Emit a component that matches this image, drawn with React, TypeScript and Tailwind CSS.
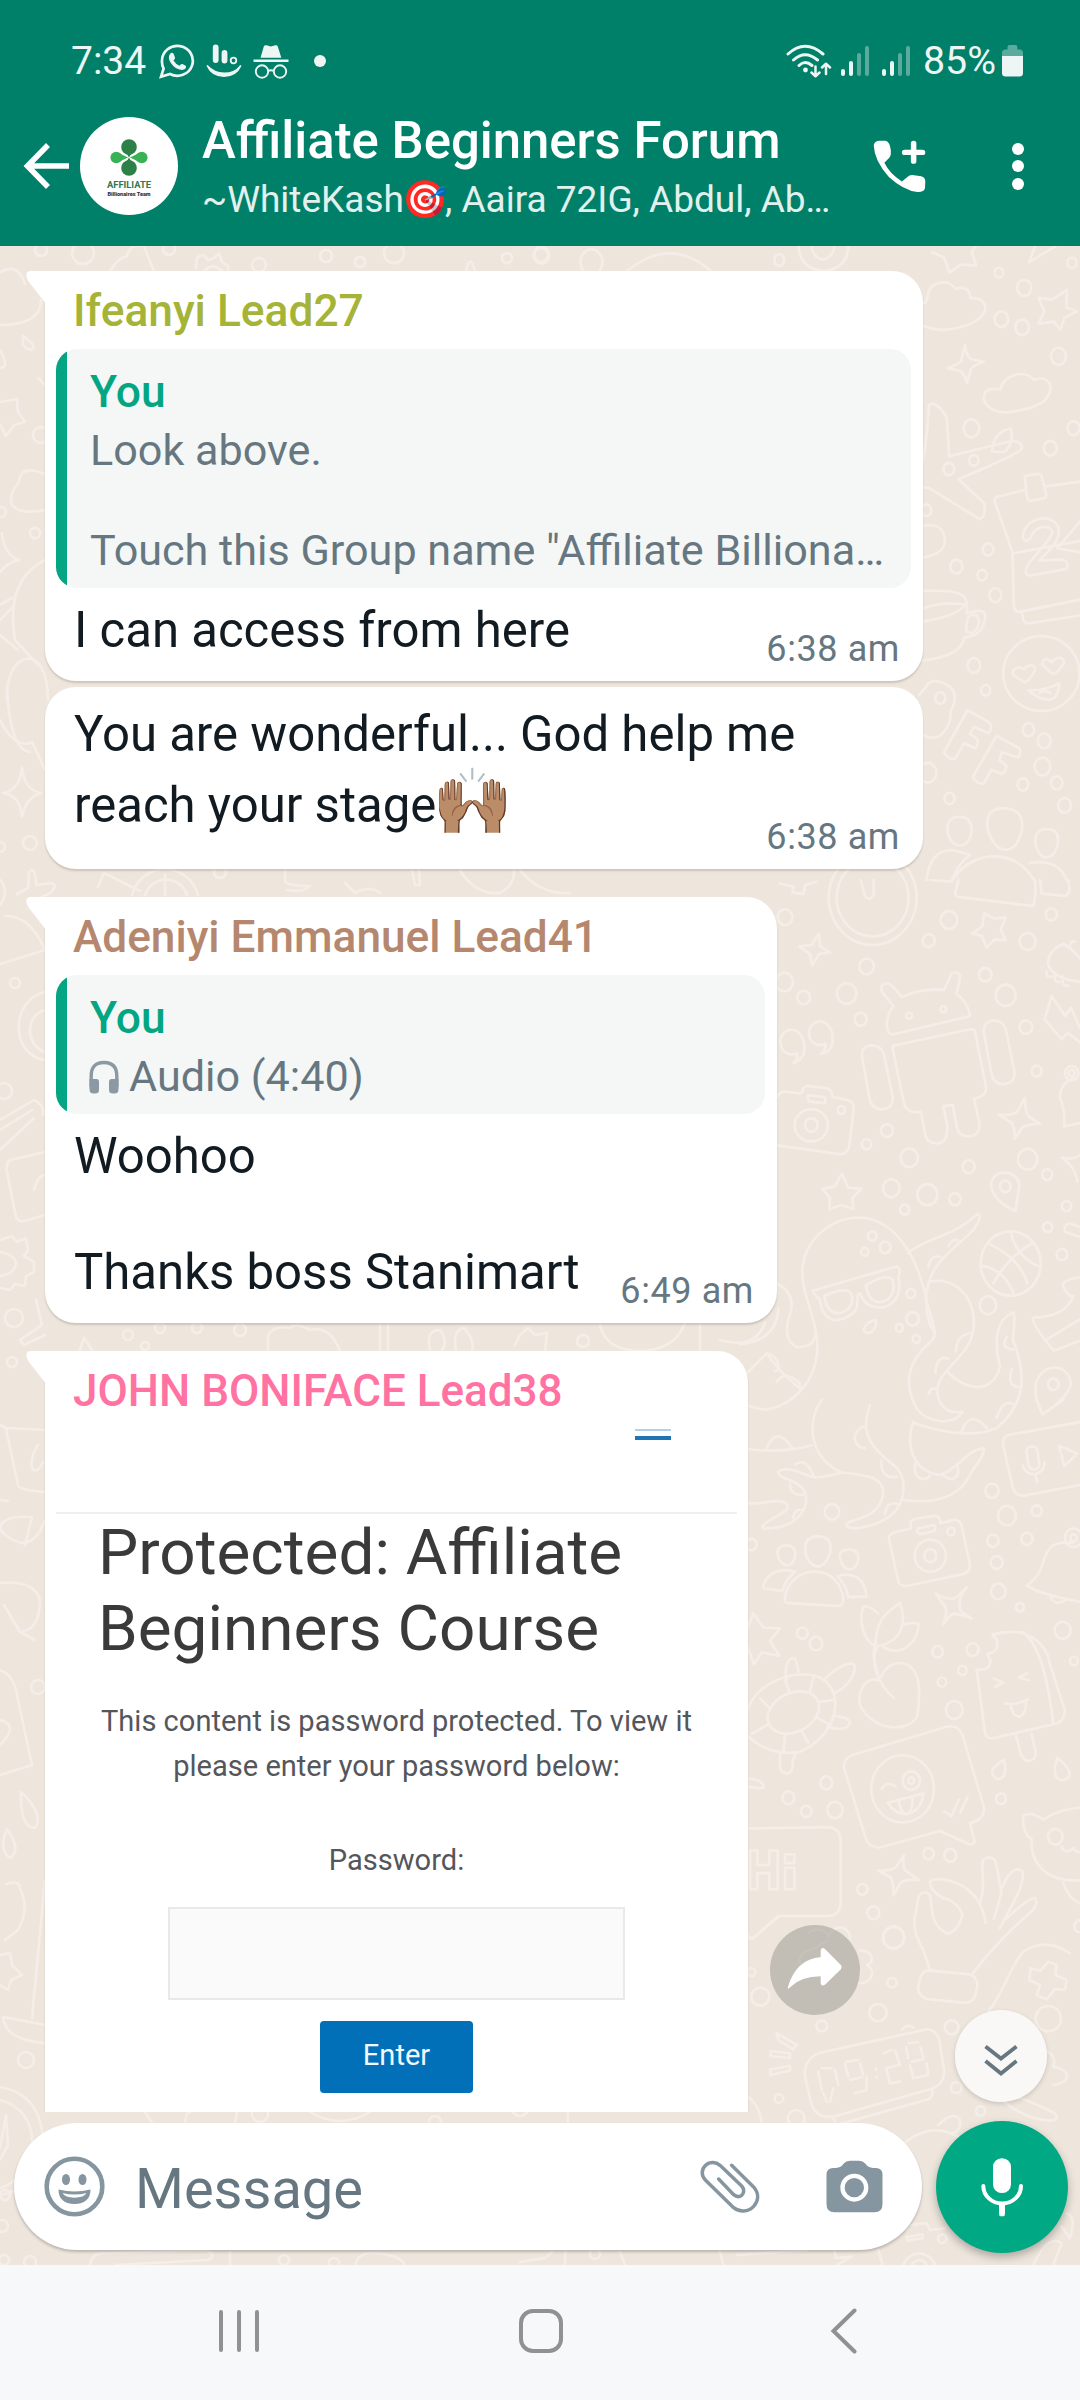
import React from "react";

/* ---------- Wallpaper ---------- */

const dotsTopRight: [number, number, number][] = [
  [1412, 117, 20], [1348, 194, 19], [1406, 214, 19], [1508, 285, 21], [1341, 80, 12], [1546, 56, 13], [1264, 461, 22], [1485, 510, 18],
  [1271, 540, 13], [1201, 561, 15], [1550, 461, 17], [1311, 758, 15], [1222, 800, 17], [1294, 821, 13], [1331, 870, 17], [1271, 1042, 18],
  [1304, 1103, 13], [1424, 1200, 16], [1468, 1227, 18], [1463, 1290, 22], [1503, 1330, 16], [1408, 1334, 15], [1203, 1368, 14], [1525, 1385, 18],
  [1142, 1305, 24], [60, 37, 21], [200, 54, 31], [726, 49, 14], [1138, 662, 14],
];
const dotsMidRight: [number, number, number][] = [
  [135, 104, 22], [566, 170, 18], [627, 112, 25], [863, 172, 24], [934, 96, 17], [380, 242, 22], [320, 318, 29], [191, 329, 19], [133, 286, 26],
  [736, 265, 19], [797, 323, 30], [362, 390, 18], [858, 412, 19], [890, 535, 15], [441, 702, 18], [380, 740, 14], [508, 778, 26], [686, 803, 18],
  [863, 782, 29], [922, 825, 15], [454, 863, 25], [562, 881, 30], [645, 894, 17], [494, 923, 14], [980, 913, 14], [923, 972, 14], [966, 1049, 16],
  [744, 1191, 25], [397, 997, 13], [436, 1029, 16], [374, 1041, 11], [513, 1158, 13], [518, 1229, 19], [478, 1254, 11], [529, 1285, 11],
];
const dotsLowRight: [number, number, number][] = [
  [276, 313, 22], [34, 405, 16], [756, 254, 20], [801, 324, 27], [890, 310, 15], [759, 394, 17], [861, 389, 17], [770, 455, 18], [775, 536, 22],
  [840, 580, 12], [187, 653, 16], [228, 682, 19], [593, 705, 16], [698, 699, 18], [667, 757, 13], [606, 790, 13], [643, 868, 25], [968, 645, 24],
  [1002, 731, 12], [259, 1072, 18], [145, 1114, 18], [199, 1152, 16], [285, 1148, 23], [783, 1117, 15], [566, 1271, 16], [631, 1275, 18],
  [367, 1370, 15], [400, 1436, 18], [461, 1505, 31],
];
const dotsBottomRight: [number, number, number][] = [
  [581, 263, 32], [576, 398, 14], [534, 488, 26], [365, 528, 16], [181, 440, 27], [154, 367, 12], [237, 746, 13], [289, 805, 25], [755, 532, 21],
  [769, 713, 16], [842, 783, 14], [1045, 506, 38], [727, 1166, 13], [1141, 229, 18],
];
const dotsLeft: [number, number, number][] = [
  [41, 250, 6], [83, 253, 11], [169, 249, 6], [326, 256, 6], [259, 265, 7], [360, 262, 5], [394, 253, 10], [507, 258, 5], [541, 255, 7],
  [35, 533, 5], [41, 435, 8], [1, 512, 5], [30, 843, 7], [0, 847, 5], [15, 983, 5], [4, 1091, 8], [14, 1318, 9], [128, 1335, 5], [160, 1328, 5],
  [145, 1346, 4], [12, 1362, 5], [38, 1687, 7], [26, 2060, 8], [5, 2195, 5], [2, 2226, 6], [4, 2260, 5], [30, 2262, 6], [284, 2260, 5], [334, 2263, 5],
  [583, 1341, 6], [197, 1328, 5], [240, 1330, 6], [260, 2114, 8], [435, 2122, 6], [520, 2108, 8], [595, 2254, 5], [220, 872, 6],
];

function Dots({ items }: { items: [number, number, number][] }) {
  return (
    <>
      {items.map(([x, y, r], i) => (
        <circle key={i} cx={x} cy={y} r={r} />
      ))}
    </>
  );
}

function Wallpaper() {
  return (
    <svg
      className="absolute inset-0 h-full w-full [&_*]:[vector-effect:non-scaling-stroke]"
      viewBox="0 246 1080 2019"
      preserveAspectRatio="none"
      fill="none"
      stroke="#f5eee8"
      strokeWidth="2.6"
      strokeLinecap="round"
      strokeLinejoin="round"
    >
      <g transform="translate(520 240) scale(.3571 .4082)">
        <Dots items={dotsTopRight} />
        <path d="M300 76Q420-10 535 76M780 10Q780 70 850 76Q920 70 920 10M815 10Q820 45 850 48Q880 40 880 10M1155 30L1187 43L1203 80L1235 60L1278 63L1265 30L1280 10M1500 15L1425 55L1445 10" />
        <path d="M1128 155C1140 155 1140 140 1145 125C1160 100 1200 95 1220 120C1245 110 1262 125 1260 142C1290 140 1305 155 1303 170C1295 200 1240 216 1190 220C1165 222 1145 215 1128 210" />
        <path d="M1532 122L1530 165L1560 175L1525 190L1513 220L1495 200L1452 205L1468 175L1452 142L1490 146Z" />
        <path d="M1246 258Q1252 290 1265 292L1299 299Q1270 305 1262 318L1252 350Q1242 325 1233 320L1197 314Q1225 305 1235 297Z" />
        <path d="M1302 375C1310 360 1335 365 1345 366C1355 330 1410 315 1440 343C1470 330 1490 350 1484 372C1475 405 1420 415 1370 422C1320 425 1290 400 1302 375Z" />
        <path d="M1128 545Q1142 470 1145 405Q1165 390 1195 435L1202 530L1380 492Q1410 495 1404 512Q1395 525 1228 586L1300 645Q1305 680 1287 684L1145 607H1128" />
        <path d="M1322 518Q1325 470 1375 462Q1385 500 1355 520ZM1333 630L1415 612M1470 604L1568 592M1414 585Q1412 578 1420 577L1450 573Q1460 573 1462 582L1473 620Q1475 632 1465 633L1432 639Q1422 639 1420 630ZM1333 630Q1328 635 1330 642L1379 765L1383 895Q1385 912 1400 911L1568 881M1379 768L1568 737M1405 912L1410 932Q1415 940 1425 939L1568 920" />
        <path d="M1408 728C1410 680 1490 665 1508 705C1515 740 1480 760 1455 785L1520 783Q1540 790 1530 806L1430 822Q1410 822 1420 800C1440 770 1490 735 1490 715C1485 695 1440 700 1430 730Q1415 745 1408 728ZM1568 690L1505 755L1568 765" />
        <path d="M1128 860Q1240 855 1248 880Q1255 900 1250 915Q1300 900 1303 920Q1300 970 1245 973Q1235 1020 1128 1030M1128 935Q1230 920 1245 893Q1180 885 1128 903M1255 925Q1240 965 1265 963Q1295 945 1280 920Q1265 915 1255 925ZM1128 700Q1190 690 1190 740Q1185 770 1128 778" />
        <ellipse cx="1460" cy="1062" rx="107" ry="92" />
        <path d="M1380 1065C1378 1045 1400 1045 1412 1052C1425 1035 1450 1042 1440 1058Q1425 1080 1413 1084ZM1462 1040C1465 1022 1480 1025 1490 1035C1500 1018 1530 1022 1522 1038Q1508 1058 1492 1064ZM1424 1103Q1470 1105 1510 1086Q1510 1115 1490 1125Q1455 1130 1424 1103ZM1455 1110Q1470 1100 1485 1110" />
        <path d="M1118 1115L1145 1085Q1165 1072 1205 1095Q1230 1120 1205 1155Q1210 1190 1175 1215Q1150 1225 1128 1212M1253 1152L1315 1182Q1325 1195 1312 1208L1272 1193L1260 1210L1280 1222Q1285 1235 1275 1245L1243 1233L1220 1268Q1205 1278 1187 1255ZM1335 1215L1398 1245Q1405 1258 1395 1268L1350 1255L1342 1275L1362 1288Q1362 1302 1350 1308L1320 1298L1300 1330Q1285 1338 1268 1315Z" />
        <circle cx="1177" cy="1122" r="14" />
        <path d="M1354 1392C1420 1392 1415 1450 1385 1485Q1355 1505 1330 1480C1300 1445 1295 1392 1354 1392ZM1230 1413C1275 1413 1270 1460 1250 1478Q1228 1490 1210 1475C1190 1450 1190 1413 1230 1413ZM1475 1443C1520 1443 1510 1490 1490 1507Q1470 1520 1455 1503C1435 1475 1440 1443 1475 1443ZM1138 1568Q1150 1490 1215 1495L1260 1506Q1225 1530 1210 1568M1210 1568Q1260 1508 1330 1510Q1400 1512 1440 1568M1427 1526Q1510 1515 1530 1568" />
      </g>

      <g transform="translate(740 880) scale(.3333 .3571)">
        <Dots items={dotsMidRight} />
        <circle cx="398" cy="50" r="132" />
        <circle cx="398" cy="50" r="108" />
        <path d="M362 0L375 45Q390 62 402 40L400 0M120 10L160 18L158 35L190 40L195 15L230 5M655 0L645 40Q650 48 660 48L880 73Q890 40 885 0M900 0L905 38L975 45Q990 40 988 20L985 0M570 0L635 5" />
        <path d="M733 93L762 108L797 105L782 138L796 168L763 167L740 190L726 157L697 150L727 130ZM237 150L240 185L270 203L238 207L217 240L210 207L178 186L215 182Z" />
        <path d="M445 425C435 400 445 370 460 353L425 312Q420 290 440 290Q455 290 485 328Q545 302 612 308L635 262Q650 252 660 268Q660 290 648 318Q680 340 690 375Q690 382 683 383L460 432Q448 433 445 425Z" />
        <circle cx="507" cy="380" r="9" />
        <circle cx="610" cy="362" r="9" />
        <path d="M458 472Q456 464 466 463L690 418Q702 415 705 425L738 580Q742 605 702 612L718 680Q720 718 685 718Q655 718 650 690L638 630L610 633L622 690Q625 735 590 738Q560 738 555 710L543 650Q500 655 492 625ZM367 500Q360 465 395 463Q425 463 432 490L458 605Q462 640 425 642Q395 642 388 610ZM732 430Q728 395 762 393Q790 393 798 420L823 535Q828 568 790 572Q762 572 755 545Z" />
        <path d="M193 470C190 400 120 410 121 455C122 485 155 495 172 484Q175 500 160 513Q195 500 193 470ZM278 445C278 380 205 385 207 430C208 460 240 468 257 458Q258 475 243 487Q280 480 278 445Z" />
        <path d="M110 610Q120 592 135 593L182 597Q188 595 190 583Q195 577 205 577L262 583Q275 585 277 607L325 617Q342 622 341 640L328 745Q322 768 300 768L110 743M205 603L250 607Q258 612 255 625L208 620Q200 615 205 603Z" />
        <ellipse cx="214" cy="687" rx="50" ry="45" />
        <circle cx="214" cy="686" r="19" />
        <circle cx="304" cy="644" r="11" />
        <path d="M855 610Q855 655 870 665L900 682Q855 685 845 695L824 725Q825 690 815 680L776 657Q815 660 830 650ZM305 822L325 862L364 865L337 890L340 922L303 910L268 922L270 890L247 865L285 858ZM827 927Q760 900 753 855C755 805 835 810 838 855Z" />
        <circle cx="796" cy="858" r="16" />
        <path d="M935 325L975 380L993 358L1020 415M935 325L914 390L965 446L983 428L1020 455M925 240Q920 200 970 178Q1000 195 1020 220M925 240Q950 280 1020 285M920 255Q915 275 935 270M945 262Q940 290 958 285M968 270Q965 300 985 296M990 185Q990 170 1005 172M960 610Q960 570 1000 555M960 610Q975 640 973 690L1020 680" />
        <circle cx="995" cy="541" r="20" />
        <circle cx="995" cy="541" r="9" />
        <path d="M965 778Q1000 785 1020 770M965 778Q1005 800 1012 845M1020 1000L975 985Q970 965 990 962L1020 972M968 1135Q970 1118 1020 1113M968 1135Q985 1170 1000 1165Q975 1225 880 1225Q870 1240 942 1318L1020 1290M915 1290L1020 1230" />
        <circle cx="812" cy="1074" r="90" />
        <path d="M727 1080Q790 1090 820 1155M750 1020Q840 1060 862 1130M760 1130Q800 1060 875 1018M812 985Q830 1060 900 1083" />
        <path d="M232 1300C230 1220 185 1170 187 1090C195 1000 280 945 358 945C480 950 540 1080 560 1180C580 1250 595 1270 575 1290C500 1350 490 1410 530 1480C560 1520 640 1530 668 1490C600 1500 580 1440 600 1400C640 1340 700 1320 702 1240C700 1160 640 1110 565 1125M503 1045C560 1000 640 1000 712 935Q730 940 700 980C640 1040 560 1070 558 1180Q560 1240 585 1270" />
        <path d="M218 1150L470 1082Q485 1090 475 1110Q490 1180 430 1197Q375 1200 362 1160Q350 1150 352 1190Q345 1225 285 1233Q245 1225 240 1175Q225 1165 218 1150ZM253 1165Q260 1215 300 1213Q345 1200 335 1160Q320 1135 253 1165ZM378 1135Q385 1185 425 1182Q470 1170 458 1120Q440 1100 378 1135ZM370 1260Q380 1235 408 1232Q412 1250 395 1265Q380 1275 370 1260Z" />
        <path d="M110 1130Q175 1160 145 1230Q130 1290 170 1308Q225 1310 225 1270M232 1300C235 1400 160 1470 80 1483Q40 1480 22 1470M0 1300Q110 1290 115 1200M22 1380Q70 1335 80 1325Q110 1370 180 1425M80 1325C130 1340 115 1380 105 1375M110 1405Q135 1370 180 1410V1425M620 1375C700 1450 770 1420 780 1360C760 1290 770 1230 820 1210C830 1230 815 1290 820 1290C870 1410 840 1480 770 1535Q680 1570 525 1522" />
        <path d="M648 1320Q650 1270 695 1270M586 1380Q590 1330 625 1340M566 1440Q570 1420 590 1425M665 1545Q690 1480 740 1535M770 1505Q790 1450 825 1470M840 1420Q800 1420 815 1370M820 1315Q780 1310 800 1280M625 1025Q640 1000 655 1010M565 1085Q570 1050 600 1055" />
        <path d="M908 1495Q880 1450 888 1410C905 1350 985 1350 993 1410Q985 1450 908 1495Z" />
        <circle cx="940" cy="1412" r="16" />
      </g>

      <g transform="translate(740 1400) scale(.3333 .3571)">
        <Dots items={dotsLowRight} />
        <path d="M245 0C200 60 205 160 305 203C390 210 430 220 430 260C420 330 350 330 320 345C310 370 400 360 450 325C500 290 500 220 470 190C420 150 350 110 390 15M305 203Q220 225 200 210C150 190 130 190 115 200C110 220 160 220 185 245C220 280 190 360 70 360C50 350 130 320 142 305C150 285 120 280 85 285Q50 292 22 288M22 137Q130 150 215 127M80 135Q110 70 155 133M343 105Q350 75 375 75M375 135Q350 135 343 105M425 170C420 200 440 222 470 215M520 60C495 130 520 200 600 210C660 190 680 140 730 135C740 150 700 190 690 210Q640 300 490 280M525 180C520 230 560 225 570 212M650 180C665 210 640 235 612 212M150 235Q150 270 190 265M165 180Q200 160 220 212M160 330Q165 300 190 310M435 320Q440 280 475 292" />
        <path d="M1020 62L805 98Q785 105 790 130L820 250Q828 268 850 268L1020 238M860 145Q862 130 875 130Q890 130 893 145L898 180Q895 195 882 195Q867 193 865 180ZM848 183Q855 208 885 208Q915 200 913 175M886 208L892 230M957 128L1012 150L973 185ZM890 0L908 40L970 0" />
        <path d="M447 390Q445 378 460 372L512 360V342Q515 335 530 332L585 324Q600 325 602 345L645 335Q660 338 664 350L690 460Q692 480 670 487L500 521Q480 522 475 508ZM533 360L580 350Q590 355 583 367L540 376Q528 372 533 360Z" />
        <ellipse cx="571" cy="436" rx="47" ry="45" />
        <circle cx="571" cy="436" r="18" />
        <circle cx="633" cy="368" r="11" />
        <path d="M233 382C290 382 275 440 250 460Q230 475 210 455C190 430 185 382 233 382ZM138 407C175 407 170 445 152 460Q138 468 124 455C108 435 105 407 138 407ZM327 419C365 419 358 455 342 470Q326 480 312 467C295 445 290 419 327 419ZM135 555C145 460 300 450 310 560Q308 578 295 577L140 568Q132 566 135 555ZM70 520Q90 465 165 480Q135 505 127 535L72 528ZM292 493Q370 475 380 550L325 552Q320 520 292 493Z" />
        <path d="M22 640L40 597L70 637L120 640L90 675L118 716L65 707L42 740L22 690M680 525Q650 560 662 590L694 612Q650 595 635 600L610 627Q625 590 615 578L588 543Q630 565 650 552Z" />
        <path d="M480 568C500 620 490 680 405 690C410 620 430 600 480 568ZM415 598Q390 575 370 578C355 620 370 670 405 690M485 630Q520 620 537 628C530 680 490 720 430 693M412 690C385 740 420 800 462 835M405 690C390 730 420 760 415 785C370 770 340 840 370 870C410 930 520 930 533 880C540 820 545 760 500 740Q450 725 423 775" />
        <ellipse cx="160" cy="875" rx="80" ry="55" transform="rotate(-22 160 875)" />
        <path d="M22 870C50 780 200 740 260 790C320 850 270 950 180 985Q90 1000 22 940M60 835L88 862M135 785L150 822M222 770L210 815M285 840L235 845M270 910L232 890M205 960L185 928M130 990L135 935M35 935L85 908M140 785C130 740 150 715 165 725Q180 760 172 770M255 780C300 740 340 730 345 745C345 780 310 810 285 820M120 985V1030Q125 1048 145 1046Q160 1040 158 1010L168 985M285 885Q330 890 330 905Q320 930 262 915M22 1060Q75 1065 70 1085Q55 1090 22 1082" />
        <path d="M312 1030Q310 1005 335 995L620 915Q655 908 668 940L732 1140Q735 1175 690 1185L704 1235Q702 1248 685 1243L600 1207L420 1253Q395 1255 380 1235Z" />
        <circle cx="488" cy="1089" r="94" />
        <circle cx="514" cy="1066" r="26" />
        <circle cx="514" cy="1066" r="9" />
        <path d="M425 1090Q440 1065 467 1082M443 1128L550 1102Q545 1150 500 1160Q465 1160 443 1128ZM478 1125Q480 1155 500 1160Q520 1150 517 1113M612 1152L635 1165L657 1118M660 1157L683 1112" />
        <path d="M757 657C860 630 920 680 930 740L975 870Q972 905 940 908L755 948Q738 948 735 930L710 755Q750 760 752 730Q740 715 745 710Q780 705 770 670ZM850 650C890 680 920 750 940 908M762 780L790 792L765 803M862 765L838 777L866 785M795 850Q830 855 865 838M812 852Q815 885 838 887Q860 880 858 842M828 940L843 990Q850 1012 870 1010Q890 1005 887 985L875 935" />
        <path d="M22 1200L265 1196Q302 1200 302 1235V1410Q300 1443 265 1445H118L40 1505Q22 1508 22 1490" />
        <path d="M30 1262H52V1302H88V1262H113V1370H88V1325H52V1370H30ZM135 1310H163V1370H135ZM135 1272H163V1297H135ZM792 1008Q750 1030 758 1050Q770 1070 790 1055Q800 1040 792 1008ZM952 1002Q990 1030 990 1050Q975 1075 950 1058Q938 1040 952 1002Z" />
        <path d="M492 1275Q485 1310 500 1320L537 1345Q490 1340 480 1355L460 1387Q462 1345 450 1335L413 1317Q460 1320 470 1305ZM861 520C920 480 900 440 935 410Q960 395 1000 400M861 520Q900 545 1020 565M932 548Q940 580 980 560M1020 1142Q960 1145 910 1175Q870 1150 850 1165Q845 1210 875 1230C870 1290 910 1350 1020 1345M970 1352Q985 1395 1020 1410M965 1250Q975 1275 1000 1255Q1010 1270 1020 1265" />
        <circle cx="1001" cy="386" r="26" />
        <circle cx="1001" cy="386" r="10" />
        <circle cx="946" cy="1223" r="22" />
      </g>

      <g transform="translate(700 1850) scale(.3333)">
        <Dots items={dotsBottomRight} />
        <path d="M645 200Q635 240 670 300L690 360M645 200L655 145Q665 115 690 135C700 190 690 220 740 250Q770 250 788 195Q780 170 750 150C720 145 690 120 690 95C710 75 840 90 857 220M840 160C860 100 840 60 850 30Q865 15 885 30C900 80 900 120 905 130C890 170 890 190 882 205M905 120C920 70 950 45 968 65C975 110 930 170 900 235M920 205Q990 140 1005 145Q1015 155 1000 180C930 240 880 290 815 375" />
        <path d="M690 362L805 373Q835 380 832 410L825 440Q815 460 790 458L680 447Q650 435 655 410L662 380Q670 360 690 362ZM865 485C910 430 930 350 970 305Q1040 260 1110 310M1045 335L1070 345L1066 375L1100 390L1095 420L1065 417L1040 448L1010 435L1020 405L988 390L992 355L1022 362Z" />
        <path d="M315 680Q310 630 355 610L680 538Q710 540 718 570L732 660Q735 700 700 715L400 800Q350 805 335 765ZM605 540Q620 520 640 532M400 805L410 825L685 748Q702 740 697 722" />
        <path d="M230 550L290 585L280 598L235 570ZM212 603L270 610V625L212 618ZM210 658L270 648V662L212 675ZM328 250C340 230 380 240 385 260C400 220 450 225 450 265M385 270L345 295Q290 310 300 340M480 302C520 300 525 340 500 345C530 360 515 400 480 400M145 265H160L235 197M830 560Q840 510 900 500M975 640C990 570 1080 600 1060 650C1120 660 1110 700 1060 705M900 740C950 730 1000 760 1065 790Q1080 810 1050 812C990 810 940 780 900 745" />
        <path d="M145 740Q180 770 185 815M590 900Q690 800 790 870L815 930M715 825Q760 780 780 810Q785 850 750 850M620 1140L625 1125L680 1120L690 1140L735 1135M620 1162L668 1152V1165L622 1172ZM610 1245A50 50 0 0 1 705 1245M636 1245A24 24 0 0 1 680 1245M535 1200L548 1245M1100 1090Q1130 1100 1110 1165L1085 1130M1000 1245C1030 1180 1060 1160 1085 1180L1060 1245M400 1190L408 1225L455 1220L410 1245M60 1205L70 1245M110 1215L320 1200" />
        <path d="M355 665L365 720M365 655H395M405 660L415 705M390 755L400 715M370 730L380 755M435 640L445 680M440 635L475 630M480 640L490 675M450 690L485 682M500 680L500 715M465 730L500 720M528 655V660M530 680V683M550 610L575 600M585 600L600 645M560 655L595 645M560 660L570 700L600 695M618 590L625 625M625 580L655 577M660 590L670 620M635 635L670 627M630 645L640 685L685 675L680 640" />
      </g>

      <Dots items={dotsLeft} />
      <path d="M110 271Q118 258 127 256Q130 243 144 246Q150 262 154 271M196 268L197 258Q203 252 208 260Q213 260 219 253L222 262L228 266V271M204 271Q213 262 222 271M466 271Q470 252 475 271M0 272Q18 262 25 284M41 300Q41 325 0 325M23 336Q35 345 34 348Q29 352 23 345ZM0 350Q10 368 0 368M38 378L45 385M0 402L17 399L18 412L25 422L14 425L6 436L0 424M45 474Q20 464 19 482Q8 495 12 505Q20 515 45 510M2 533Q4 555 19 560Q8 562 0 572M45 560Q5 580 15 640L38 665M0 605Q8 600 12 598M0 620L12 608M7 700C5 650 48 640 48 700M0 635L18 650M7 687Q10 750 30 752M0 720Q15 750 32 742L45 770M22 767Q24 790 41 793Q26 797 22 817Q20 795 3 793Q20 790 22 767ZM98 887L104 873L140 891M132 895A34 34 0 0 1 198 895M145 895A22 22 0 0 1 187 895M165 875V895M31 870Q36 870 36 885L52 883Q58 886 50 893L40 898M17 894L28 888L29 872M0 880Q10 890 0 905M5 916Q30 915 45 950M0 964L45 950M45 992C10 1000 10 1055 45 1060M45 1010C25 1015 25 1045 45 1052M0 1120L34 1100Q45 1105 43 1115M0 1130L32 1110M0 1150L34 1118M45 1152L10 1160Q5 1165 7 1172L16 1217Q18 1222 24 1221L45 1215M34 1190Q38 1175 45 1175" />
      <path d="M0 1240L12 1236L17 1242L26 1238L28 1250L24 1256L34 1262V1272L26 1276L25 1286L15 1284L10 1290L0 1288M0 1252Q16 1255 16 1264Q14 1274 0 1276M36 1300L42 1325L20 1340L24 1345L45 1335M80 1350L84 1338L92 1350M285 870V880Q285 886 310 886Q304 893 287 890M345 883L355 893Q370 885 380 893M412 870L415 885H420L419 870M460 870Q475 895 500 893Q515 885 514 870M520 870Q540 895 570 893M0 1425L6 1428L45 1430M6 1429L18 1485Q19 1490 45 1492M38 1445Q30 1457 32 1468Q37 1475 43 1462M0 1500L8 1501M45 1520Q30 1560 0 1530Q0 1515 32 1517L25 1545M0 1583Q35 1580 40 1600Q40 1630 20 1632L35 1640M20 1632L4 1605M0 1670Q15 1675 18 1700L32 1765L0 1775M0 1720Q20 1725 0 1745M21 1792Q45 1815 35 1828Q20 1828 21 1792ZM7 1829Q22 1850 10 1858Q-2 1850 7 1829ZM6 1884Q20 1880 20 1888Q30 1910 18 1930L5 1940M45 1880L32 2018M3 2017L45 2025M3 2017Q5 2040 45 2043M0 1955L10 1953L12 1965L22 1975L11 1980L8 1990L0 1985" />
      <path d="M0 2087Q45 2095 43 2150Q35 2190 0 2195M0 2100Q35 2110 32 2150Q25 2180 0 2188M0 2148L6 2115L8 2145L0 2160M145 2112L152 2123M185 2123Q186 2112 190 2112M235 2123L237 2112M310 2112Q340 2130 370 2112M90 2265Q92 2252 105 2253L205 2250Q218 2255 208 2260L115 2265M230 2252V2265M355 2265Q358 2252 375 2253Q400 2255 405 2265M520 2262L545 2258L552 2252M565 2265L568 2112M620 2252L625 2265M268 1351V1335Q275 1325 290 1328Q295 1322 310 1330Q330 1325 340 1351M380 1323V1351M388 1323V1351M515 1345L520 1335L528 1328L535 1335L547 1333L545 1351M600 1325Q605 1350 640 1351Q675 1350 685 1323M700 1323V1351M720 1340Q755 1350 765 1323M430 1350Q425 1330 440 1330Q448 1340 442 1351M456 1350Q452 1330 464 1328Q475 1340 472 1351" />
    </svg>
  );
}

/* ---------- Icons ---------- */

function WhatsAppIcon() {
  return (
    <svg className="h-9 w-[36px]" viewBox="0 0 36 36" fill="none">
      <path d="M3 17.6A15.4 15 0 1 1 11 31L2 33.8 4.6 25.5A15 15 0 0 1 3 17.6Z" stroke="#edf6f4" strokeWidth="2.7" />
      <path d="M11 11Q12.500 9 14.500 10.500L16 14.500Q16.300 16 14.500 17.500Q16.500 21 20.500 22.800Q22 20.500 23.500 21L27 23Q27.500 26.500 23 27Q16 26.500 11.500 19.500Q8.500 14.500 11 11Z" fill="#edf6f4" />
    </svg>
  );
}

function HandIcon() {
  return (
    <svg className="h-9 w-[36px]" viewBox="0 0 36 36" fill="none" stroke="#edf6f4" strokeLinecap="round">
      <path d="M9.700 4.500V17M18.500 10V17.500" strokeWidth="5.800" />
      <circle cx="27.500" cy="17.500" r="2.800" strokeWidth="1.800" />
      <path d="M1.500 23Q6 33 18 33.200Q30 33 34.500 23Q29 30.500 18 30.500Q8 30 1.500 23Z" fill="#edf6f4" strokeWidth="1.800" strokeLinejoin="round" />
    </svg>
  );
}

function IncognitoIcon() {
  return (
    <svg className="h-9 w-[36px]" viewBox="0 0 36 36" fill="none">
      <path d="M7.500 14.800L10.800 3.500Q11.500 1.800 13.500 2.300L17.800 3.500L22.300 2.300Q24.200 1.900 24.800 3.600L28.300 14.800Z" fill="#edf6f4" />
      <path d="M.5 16.500H35.500V19H.5Z" fill="#edf6f4" />
      <circle cx="9" cy="28.500" r="6.200" stroke="#edf6f4" strokeWidth="1.900" />
      <circle cx="27" cy="28.500" r="6.200" stroke="#edf6f4" strokeWidth="1.900" />
      <path d="M15 28Q18 26.500 21 28" stroke="#edf6f4" strokeWidth="1.900" />
    </svg>
  );
}

function WifiIcon() {
  return (
    <svg className="h-[34px] w-[46px]" viewBox="0 0 46 34" fill="none" stroke="#edf6f4" strokeWidth="3" strokeLinecap="round" strokeLinejoin="round">
      <path d="M2 10Q19-5.500 37 10M7.500 16Q19 5.500 31.500 16M13 21.500Q19 15.500 26 21.500" />
      <circle cx="19.500" cy="26" r="2.400" fill="#edf6f4" stroke="none" />
      <path d="M29.500 22.500V32M25.500 28.500L29.500 32.300L33.500 28.500M40 30V20M36 23.500L40 19.700L44 23.500" strokeWidth="2.500" />
    </svg>
  );
}

function SignalIcon() {
  return (
    <div className="flex h-[30px] items-end gap-[4px]">
      <span className="h-[7px] w-[4px] rounded-full bg-[#edf6f4]" />
      <span className="h-[15px] w-[4px] rounded-full bg-[#edf6f4]" />
      <span className="h-[23px] w-[4px] rounded-full bg-[#5aab9d]" />
      <span className="h-[30px] w-[4px] rounded-full bg-[#5aab9d]" />
    </div>
  );
}

function BatteryIcon() {
  return (
    <svg className="h-[32px] w-[21px]" viewBox="0 0 21 32">
      <path d="M0 11V8Q0 4.500 3.500 4.500H5.500V2Q5.500 0 7.500 0H13.500Q15.300 0 15.300 2V4.500H17.500Q21 4.500 21 8V11Z" fill="#5aab9d" />
      <path d="M0 11H21V28Q21 31.500 17.500 31.500H3.500Q0 31.500 0 28Z" fill="#edf6f4" />
    </svg>
  );
}

function GroupLogo() {
  return (
    <div className="flex h-[98px] w-[98px] shrink-0 flex-col items-center overflow-hidden rounded-full bg-white pt-[21px] font-['Roboto',sans-serif]">
      <svg className="h-[40px] w-[40px]" viewBox="0 0 42 42">
        <circle cx="21" cy="9.500" r="8.200" fill="#2d8048" />
        <path d="M14 14Q19 16 21 20.500Q23 16 28 14Z" fill="#2d8048" />
        <circle cx="21" cy="31.500" r="8.200" fill="#2d8048" />
        <path d="M14 27Q19 25 21 20.500Q23 25 28 27Z" fill="#2d8048" />
        <circle cx="7.500" cy="20.500" r="6" fill="#37b254" />
        <path d="M10 15Q14 18 20 20.500Q14 23 10 26Z" fill="#37b254" />
        <circle cx="34.500" cy="20.500" r="6" fill="#37b254" />
        <path d="M32 15Q28 18 22 20.500Q28 23 32 26Z" fill="#37b254" />
      </svg>
      <div className="mt-[2px] text-[9.4px] leading-[10px] font-bold text-[#2f7a4e]">AFFILIATE</div>
      <div className="text-[5.500px] leading-[8px] font-black text-[#333]">Billionaires Team</div>
    </div>
  );
}

function AddCallIcon() {
  return (
    <svg className="h-[53px] w-[53px]" viewBox="966 422 154 158" preserveAspectRatio="none">
      <path
        d="M968 438Q970 424 985 424L1003 424Q1015 426 1018 455Q1019 468 1014 474L999 490Q1014 522 1050 546L1066 532Q1071 526 1080 526L1106 530Q1118 533 1118 546L1117 566Q1114 578 1095 577Q1055 572 1012 532Q970 485 968 438Z"
        fill="#fff"
      />
      <path d="M1084 432V485M1058 459H1110" stroke="#fff" strokeWidth="16" strokeLinecap="round" />
    </svg>
  );
}

function HeadphonesIcon() {
  return (
    <svg className="h-[34px] w-[30px]" viewBox="0 0 30 34" fill="none">
      <path d="M2.200 27V16Q2.200 2.500 15 2.500Q27.800 2.500 27.800 16V27" stroke="#8a99a4" strokeWidth="3.400" />
      <path d="M.5 19H7.500Q10 19 10 22V30Q10 33.500 6 33.500H4.500Q.5 33.500 .5 29.500ZM29.500 19H22.500Q20 19 20 22V30Q20 33.500 24 33.500H25.500Q29.500 33.500 29.500 29.500Z" fill="#8a99a4" />
    </svg>
  );
}

function SmileyIcon() {
  return (
    <svg className="h-[61px] w-[61px]" viewBox="0 0 61 61" fill="#8696a0">
      <circle cx="30.500" cy="30.500" r="27.800" fill="none" stroke="#8696a0" strokeWidth="4.600" />
      <ellipse cx="22" cy="23.500" rx="4" ry="5.500" />
      <ellipse cx="38.500" cy="23.500" rx="4" ry="5.500" />
      <path d="M14.500 33.500Q30.500 37.500 46.500 33.500Q46.500 47.500 30.500 48Q14.500 47.500 14.500 33.500Z" />
      <path d="M18.500 37Q30.500 40 42.500 37Q40 41.500 30.500 41.700Q21 41.500 18.500 37Z" fill="#fff" />
    </svg>
  );
}

function PaperclipIcon() {
  return (
    <svg className="h-[53px] w-[60px]" viewBox="2 930 180 159" fill="none" stroke="#8696a0" strokeWidth="10.500" strokeLinecap="round" strokeLinejoin="round">
      <path d="M97 946L162 1010C180 1030 178 1052 163 1069C146 1087 120 1087 103 1073L18 990C5 976 6 958 19 946C32 934 50 936 62 946L127 1008C136 1018 134 1030 127 1036C119 1042 110 1040 103 1034L58 987" />
    </svg>
  );
}

function CameraIcon() {
  return (
    <svg className="h-[53px] w-[57px]" viewBox="379 928 170 159">
      <path
        d="M380 972Q380 952 400 952H408Q424 950 431 939Q439 930 450 930H478Q489 930 497 939Q504 950 520 952H528Q548 952 548 972V1060Q548 1085 524 1085H404Q380 1085 380 1060Z"
        fill="#8696a0"
      />
      <circle cx="463.500" cy="1011" r="35.500" fill="none" stroke="#fff" strokeWidth="13" />
    </svg>
  );
}

function MicIcon() {
  return (
    <svg className="h-[60px] w-[44px]" viewBox="840 920 132 180" fill="none" stroke="#fff">
      <rect x="879" y="924" width="54" height="104" rx="26" fill="#fff" stroke="none" />
      <path d="M850 1007A56 52 0 0 0 963 1007" strokeWidth="12" strokeLinecap="round" />
      <path d="M906 1060V1091" strokeWidth="18" />
      <path d="M902 1093H910" strokeWidth="9" strokeLinecap="round" />
    </svg>
  );
}

/* ---------- Messages ---------- */

function Tail() {
  return (
    <svg className="absolute top-0 left-[-19px] h-[32px] w-[20px]" viewBox="0 0 20 32">
      <path d="M20 0H5Q0 0 .4 5Q.8 8 3 11L19 31.500H20Z" fill="#fff" />
    </svg>
  );
}

function Time({ children }: { children: string }) {
  return <span className="mr-[23px] ml-auto shrink-0 self-end text-[36px] leading-[42px] tracking-[0.6px] text-[#667781]">{children}</span>;
}

function Quote({ className, children }: { className: string; children: React.ReactNode }) {
  return (
    <div className={"ml-[11px] flex shrink-0 overflow-hidden rounded-[21px] bg-[#f4f7f6] " + className}>
      <div className="w-[11px] shrink-0 bg-[#03a582]" />
      <div className="pt-[18px] pl-[23px]">
        <div className="text-[44.4px] leading-[50px] font-medium text-[#03a582]">You</div>
        <div className="mt-[8.5px] text-[43.15px] leading-[50px] text-[#667781]">{children}</div>
      </div>
    </div>
  );
}

function Bubble({ className, children }: { className: string; children: React.ReactNode }) {
  return <article className={"relative flex shrink-0 flex-col bg-white shadow-[0_2px_2px_rgba(90,75,60,0.22)] " + className}>{children}</article>;
}

export default function App() {
  return (
    <div className="flex h-[2400px] w-[1080px] flex-col overflow-hidden bg-white font-['Roboto','Noto_Color_Emoji',sans-serif]">
      <header className="h-[246px] shrink-0 bg-[#008069] text-white">
        <div className="flex h-[117px] items-center pt-[4px] pr-[57px] pl-[71px] text-[#edf6f4]">
          <span className="w-[88px] text-[39px] leading-[46px]">7:34</span>
          <div className="flex items-center gap-[11px]">
            <WhatsAppIcon />
            <HandIcon />
            <IncognitoIcon />
          </div>
          <span className="ml-[25px] h-[12px] w-[12px] rounded-full bg-[#edf6f4]" />
          <div className="ml-auto flex items-center">
            <WifiIcon />
            <div className="ml-[9px] flex gap-[13px]">
              <SignalIcon />
              <SignalIcon />
            </div>
            <span className="ml-[13px] w-[79px] text-[39.3px] leading-[46px]">85%</span>
            <BatteryIcon />
          </div>
        </div>

        <div className="flex h-[98px] items-center">
          <svg className="ml-[22px] h-[48px] w-[48px] shrink-0" viewBox="0 0 48 48" fill="none" stroke="#fff" strokeWidth="5.600">
            <path d="M26 3L5.500 24L26 45M4 24H47" />
          </svg>
          <div className="ml-[10px]">
            <GroupLogo />
          </div>
          <div className="-mt-[4px] ml-[24px] self-start whitespace-nowrap">
            <div className="text-[50.9px] leading-[56px] font-medium">Affiliate Beginners Forum</div>
            <div className="mt-[6px] flex h-[50px] items-center text-[37px] leading-[50px] text-[#e3f1ee]">
              <span>~WhiteKash</span>
              <span className="-mr-[2px] -ml-[2px] w-[45px] text-center text-[37px]">🎯</span>
              <span>, Aaira 72IG, Abdul, Ab…</span>
            </div>
          </div>
          <div className="mr-[56px] ml-auto flex items-center gap-[86px]">
            <AddCallIcon />
            <div className="flex flex-col gap-[5.5px]">
              <span className="h-[12px] w-[12px] rounded-full bg-white" />
              <span className="h-[12px] w-[12px] rounded-full bg-white" />
              <span className="h-[12px] w-[12px] rounded-full bg-white" />
            </div>
          </div>
        </div>
      </header>

      <main className="relative flex h-[2019px] shrink-0 flex-col bg-[#eee6dd]">
        <Wallpaper />

        <section className="relative flex h-[1866px] shrink-0 flex-col items-start overflow-hidden pt-[25px] pl-[45px] text-[49.1px] leading-[58px] whitespace-nowrap text-[#111b21]">
          <Bubble className="h-[410px] w-[878px] rounded-[31px] rounded-tl-none">
            <Tail />
            <div className="mt-[12px] mb-[10px] pl-[28px] text-[44.3px] leading-[56px] font-medium text-[#a5b337]">Ifeanyi Lead27</div>
            <Quote className="h-[239px] w-[855px]">
              Look above.
              <br />
              <br />
              Touch this Group name "Affiliate Billiona…
            </Quote>
            <div className="flex flex-1 pb-[11px]">
              <p className="mt-[13px] pl-[29px]">I can access from here</p>
              <Time>6:38 am</Time>
            </div>
          </Bubble>

          <Bubble className="mt-[6px] h-[182px] w-[878px] rounded-[31px]">
            <div className="flex flex-1 pb-[11px]">
              <p className="mt-[12px] w-[600px] pl-[29px] leading-[71px]">
                You are wonderful... God help me
                <br />
                <span className="flex h-[71px]">
                  reach your stage<span className="-mt-[3px] -ml-[4px] text-[65px]">🙌🏽</span>
                </span>
              </p>
              <Time>6:38 am</Time>
            </div>
          </Bubble>

          <Bubble className="mt-[28px] h-[426px] w-[732px] rounded-[31px] rounded-tl-none">
            <Tail />
            <div className="mt-[12px] mb-[10px] pl-[28px] text-[44.2px] leading-[56px] font-medium text-[#b4876e]">Adeniyi Emmanuel Lead41</div>
            <Quote className="h-[139px] w-[709px]">
              <span className="flex">
                <span className="mt-[8px] mr-[10px] -ml-px">
                  <HeadphonesIcon />
                </span>
                Audio (4:40)
              </span>
            </Quote>
            <div className="flex flex-1 pb-[11px]">
              <p className="mt-[13px] pl-[29px]">
                Woohoo
                <br />
                <br />
                Thanks boss Stanimart
              </p>
              <Time>6:49 am</Time>
            </div>
          </Bubble>

          <Bubble className="mt-[28px] h-[900px] w-[703px] rounded-[31px] rounded-tl-none">
            <Tail />
            <div className="mt-[12px] mb-[10px] pl-[28px] text-[44px] leading-[56px] font-medium text-[#ff72a1]">JOHN BONIFACE Lead38</div>
            <div className="mx-[11px] flex flex-col items-center text-[29.05px] leading-[45.5px] text-[#55565c]">
              <div className="flex h-[85px] w-full flex-col items-end gap-[5px] border-b-2 border-[#efefef] pr-[66px]">
                <span className="h-[2px] w-[36px] bg-[#a9d3ee]" />
                <span className="h-[4px] w-[36px] bg-[#1f74b4]" />
              </div>
              <h2 className="w-full pt-[0.5px] pl-[42px] text-[63.8px] leading-[76px] text-[#3a3a3a]">
                Protected: Affiliate
                <br />
                Beginners Course
              </h2>
              <p className="mt-[32px] text-center">
                This content is password protected. To view it
                <br />
                please enter your password below:
              </p>
              <p className="mt-[48px]">Password:</p>
              <div className="mt-[23.5px] h-[93px] w-[457px] border-2 border-[#e9e9e9] bg-[#fafafa]" />
              <div className="mt-[21px] h-[72px] w-[153px] rounded-[4px] bg-[#0170b9] pt-[12px] text-center text-[#f2f8fc]">Enter</div>
            </div>
          </Bubble>
        </section>

        <div className="absolute top-[1679px] left-[770px] flex h-[90px] w-[90px] items-center justify-center rounded-full bg-[#8b8b85]/45">
          <svg className="mr-[1px] mb-[4px] h-[43px] w-[57px]" viewBox="260 288 172 132">
            <path d="M264 412Q290 325 365 319V298Q368 287 378 294L427 343Q431 350 427 356L379 403Q368 410 365 400V378Q305 378 270 412Q264 420 264 412Z" fill="#fff" />
          </svg>
        </div>

        <div className="absolute top-[1764px] left-[955px] flex h-[92px] w-[92px] items-center justify-center rounded-full bg-[#faf9f7]/95 shadow-[0_2px_5px_rgba(0,0,0,0.15)]">
          <svg className="mt-[8px] h-[34px] w-[36px]" viewBox="0 0 36 34" fill="none" stroke="#667781" strokeWidth="3.800">
            <path d="M2.500 3.500L18 15.500L33.500 3.500M2.500 18L18 30.500L33.500 18" />
          </svg>
        </div>

        <div className="relative mt-[9px] flex items-center">
          <div className="mt-[2px] ml-[14px] flex h-[127px] w-[908px] items-center self-start rounded-full bg-white pr-[39px] pl-[30px] shadow-[0_2px_3px_rgba(0,0,0,0.22)]">
            <SmileyIcon />
            <span className="mt-[4px] ml-[30px] text-[56px] leading-[66px] text-[#667781]">Message</span>
            <span className="ml-auto">
              <PaperclipIcon />
            </span>
            <span className="ml-[66px]">
              <CameraIcon />
            </span>
          </div>
          <div className="ml-[14px] flex h-[132px] w-[132px] items-center justify-center rounded-full bg-[#00a884] shadow-[0_4px_8px_rgba(0,0,0,0.28)]">
            <MicIcon />
          </div>
        </div>
      </main>

      <nav className="relative flex flex-1 items-start bg-[#f7f8fa] pt-[43px]">
        <div className="mt-[2px] ml-[219px] flex gap-[14px]">
          <span className="h-[42px] w-[4px] rounded-full bg-[#919193]" />
          <span className="h-[42px] w-[4px] rounded-full bg-[#919193]" />
          <span className="h-[42px] w-[4px] rounded-full bg-[#919193]" />
        </div>
        <span className="mt-[1px] ml-[260px] h-[44px] w-[44px] rounded-[14px] border-4 border-[#919193]" />
        <svg className="ml-[267px] h-[46px] w-[28px]" viewBox="0 0 28 46" fill="none" stroke="#919193" strokeWidth="4" strokeLinecap="round">
          <path d="M24.500 2.500L3.500 23L24.500 43.500" />
        </svg>
      </nav>
    </div>
  );
}
